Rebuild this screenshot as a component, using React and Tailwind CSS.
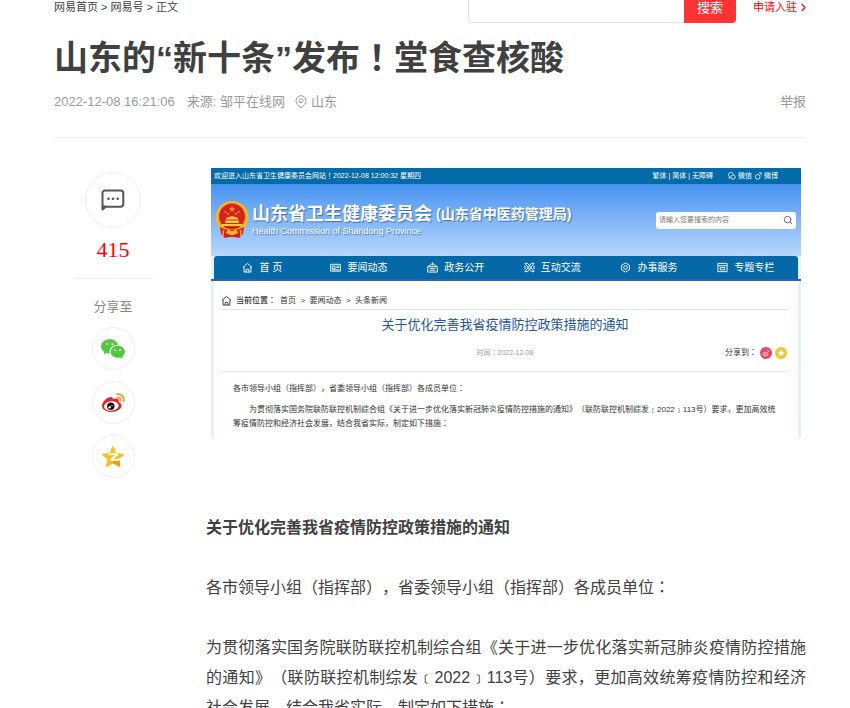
import { RiWechatFill } from "react-icons/ri";
import { Search, ChevronRight } from "lucide-react";

const STAR = "M12 1.5l3.2 7 7.6.8-5.7 5.1 1.6 7.5L12 18.1l-6.700 3.800 1.600-7.500L1.200 9.300l7.600-.8z";

const HOME = "M1 6l5-4.500L11 6M2.300 5v6h7.400V5M4.500 11V8h3v3";

const navItems = [
  { label: "首 页", path: HOME },
  { label: "要闻动态", path: "M.7 2.500h10.600v7.500H.7zM2.500 4.500h3v3h-3zM7 4.500h3M7 6h3M2.500 8.500H10" },
  { label: "政务公开", path: "M1 5l5-3.500L11 5M.8 5h10.400v6H.8zM3 7h6M3 9h6M6 .5v3" },
  { label: "互动交流", path: "M1 1.500h3L11 10.500H8zM8 1.500h3L4 10.500H1zM1 4v4M11 4v4" },
  { label: "办事服务", path: "M6 1l4.300 2.500v5L6 11 1.700 8.500v-5zM4 6a2 2 0 1 0 4 0a2 2 0 1 0-4 0" },
  { label: "专题专栏", path: "M1 1.500h10v9H1zM1 4h10M3.500 6h5v2.500h-5z" },
];

const LineIcon = ({ path }) => (
  <svg viewBox="0 0 12 12" className="w-[11px] h-[11px] shrink-0" fill="none" stroke="currentColor">
    <path d={path} strokeLinejoin="round" />
  </svg>
);

// sets ：！ in the middle of their cell
const Zh = ({ children }) =>
  children.split(/([：！])/).map((part, i) =>
    i % 2 ? (
      <span key={i} lang="zh-Hant" className="leading-none font-['Noto_Sans_CJK_TC',sans-serif]">
        {part}
      </span>
    ) : (
      part
    ),
  );

const CommentIcon = () => (
  <svg viewBox="0 0 24 24" className="w-6 h-6" fill="none">
    <path
      d="M1.500 21.500V5.500A2.700 2.700 0 0 1 4.200 2.500h15.400a2.700 2.700 0 0 1 2.700 2.700v10.800a2.700 2.700 0 0 1-2.700 2.700H4.800z"
      stroke="#555"
      strokeWidth="2"
      strokeLinejoin="round"
    />
    <path d="M1 17.500h4.500L1 22.500z" fill="#555" />
    <circle cx="7.500" cy="10.700" r="1.300" fill="#555" />
    <circle cx="12" cy="10.700" r="1.300" fill="#555" />
    <circle cx="16.700" cy="10.700" r="1.300" fill="#555" />
  </svg>
);

const WeiboIcon = () => (
  <svg viewBox="0 0 24 24" className="w-6 h-6" fill="none">
    <path
      d="M9.300 6C5.500 6.600 1 11.200 1 14.700 1 18.600 5.600 21 10.300 21c5.700 0 10.200-3 10.200-6.500 0-2-1.500-3-3-3.500.5-1.700.2-3-1.200-3.400-1.300-.4-3 .1-4.500.7C12.100 6.800 11.500 5.700 9.300 6z"
      fill="#dd2a2e"
    />
    <ellipse cx="10.300" cy="15" rx="7.300" ry="4.700" fill="#fff" transform="rotate(-6 10.300 15)" />
    <circle cx="9.800" cy="15.300" r="3.700" fill="#111" />
    <circle cx="8.700" cy="16.200" r="1.200" fill="#fff" />
    <circle cx="11" cy="14.300" r=".6" fill="#fff" />
    <path
      d="M16 3.300c4-1 7.600 2.400 6.600 7M16.600 6.600c2-.4 3.300 1 2.900 3"
      stroke="#f29a1f"
      strokeWidth="1.700"
      strokeLinecap="round"
    />
  </svg>
);

const QzoneIcon = () => (
  <svg viewBox="0 0 24 24" className="w-6 h-6">
    <path d={STAR} fill="#f8c01c" stroke="#f8c01c" strokeLinejoin="round" />
    <path d="M12.500 15.500l6-1 .9 7L12 18.100z" fill="#ee9a12" />
    <path
      d="M7.500 9.500c3-.7 6-.7 9 0l-6.500 5c2.800.6 5.500.5 8.500-.2"
      fill="none"
      stroke="#fff"
      strokeWidth="1.800"
      strokeLinejoin="round"
    />
  </svg>
);

const Emblem = () => (
  <svg viewBox="0 0 34 40" className="w-[34px] h-10 shrink-0">
    <path d="M7 27h20l1 7-4 4-4-1h-6l-4 1-4-4z" fill="#d81e1a" />
    <circle cx="17" cy="17.500" r="16.500" fill="#f4b52c" />
    <circle cx="17" cy="16.500" r="13" fill="#d9221c" />
    <path d="M17 6l.9 2.200h2.300l-1.900 1.500.7 2.300-2-1.400-2 1.400.7-2.300-1.900-1.500h2.300z" fill="#f0a03a" />
    <g fill="#f0a03a">
      <circle cx="10.500" cy="12" r="1" />
      <circle cx="13" cy="14" r="1" />
      <circle cx="21" cy="14" r="1" />
      <circle cx="23.500" cy="12" r="1" />
    </g>
    <path d="M11 18l6-2 6 2v1.500H11zM10 20.500h14V23H10zM7 24h20v2H7z" fill="#f9cf3f" />
    <path d="M5 27c6 4 18 4 24 0l-1 7c-3-1-5-2-7-2h-8c-2 0-4 1-7 2z" fill="#d9221c" />
    <path d="M12 28.500l5 3 5-3v5l-5 2-5-2z" fill="#f4b52c" />
    <path d="M8.500 30l-.5 6M25.500 30l.5 6" stroke="#f4b52c" strokeWidth="1.500" />
  </svg>
);

const PinIcon = () => (
  <svg viewBox="0 0 12 14" className="w-3 h-[14px]" fill="none" stroke="#999">
    <path d="M6 13C3 10.300 1 8.200 1 5.700a5 5 0 0 1 10 0C11 8.200 9 10.300 6 13z" />
    <circle cx="6" cy="5.700" r="2" />
  </svg>
);

const ShareButton = ({ label, children }) => (
  <button
    aria-label={label}
    className="flex items-center justify-center w-[43px] h-[43px] rounded-full border border-[#eee]"
  >
    {children}
  </button>
);

const SiteNotice = () => (
  <div className="mx-[5px] h-[270px] overflow-hidden bg-[#e6effd] text-[8px] leading-[14px] text-[#333]">
    <div className="flex items-center justify-between h-4 pl-[3px] pr-[23px] bg-[#046ba9] text-[7px] text-white">
      <span>
        <Zh>欢迎进入山东省卫生健康委员会网站！2022-12-08 12:00:32 星期四</Zh>
      </span>
      <div className="flex items-center gap-[15px]">
        <span>繁体 | 简体 | 无障碍</span>
        <span className="flex items-center gap-[2px]">
          <svg viewBox="0 0 10 10" className="w-2 h-2" fill="none" stroke="#fff">
            <path d="M3 7L1.500 8V5.500a3 3 0 1 1 5-2.500" />
            <circle cx="6.300" cy="6.300" r="2.700" />
          </svg>
          微信
          <svg viewBox="0 0 10 10" className="w-2 h-2" fill="none" stroke="#fff">
            <circle cx="4.500" cy="6" r="3" />
            <path d="M6 1h3v3" />
          </svg>
          微博
        </span>
      </div>
    </div>
    <div className="flex items-center justify-between h-[72px] pl-1 pr-[5px] bg-linear-to-b from-[#4593f0] to-[#b9d7fb]">
      <div className="flex items-center gap-[3px]">
        <Emblem />
        <div className="text-white text-shadow-[1px_1px_1px_#3a6fae]">
          <div className="flex items-center gap-1 font-bold">
            <span className="text-[18px] leading-[22px]">山东省卫生健康委员会</span>
            <span className="text-[14px] leading-[22px]">(山东省中医药管理局)</span>
          </div>
          <div className="text-[9px] leading-[12px]">Health Commission of Shandong Province</div>
        </div>
      </div>
      <div className="flex items-center w-[140px] h-[17px] px-[3px] rounded-[3px] bg-white">
        <input
          aria-label="站内搜索"
          placeholder="请输入您要搜索的内容"
          className="flex-1 min-w-0 outline-none text-[7px] placeholder:text-[#777]"
        />
        <Search className="w-[10px] h-[10px] text-[#555]" />
      </div>
    </div>
    <div className="mx-[3px] h-[23px] rounded-t-[3px] bg-[#0569a8]">
      <nav className="grid grid-cols-6 h-full pr-1">
        {navItems.map(({ label, path }) => (
          <a
            key={label}
            href="#"
            className="flex items-center justify-center gap-[6px] text-[10px] text-white"
          >
            <LineIcon path={path} />
            {label}
          </a>
        ))}
      </nav>
    </div>
    <div className="h-[2px] bg-[#2f65a8]" />
    <div className="mx-[3px] h-full pl-[7px] pr-[9px] pt-[11px] bg-white">
      <div className="flex items-center h-[18px] border-b border-[#e2e8dc]">
        <span className="mr-1">
          <LineIcon path={HOME} />
        </span>
        <span className="font-medium mr-1">
          <Zh>当前位置：</Zh>
        </span>
        <span className="whitespace-pre">首页  &gt;  要闻动态  &gt;  头条新闻</span>
      </div>
      <h3 className="mt-[5px] text-center text-[13px] leading-[20px] text-[#2455a4]">
        关于优化完善我省疫情防控政策措施的通知
      </h3>
      <div className="grid grid-cols-3 items-center mt-[11px] h-[14px]">
        <span className="col-start-2 text-center text-[7px] text-[#999]">
          <Zh>时间：2022-12-08</Zh>
        </span>
        <span className="flex items-center justify-end gap-[3px] pr-[2px]">
          <span>
            <Zh>分享到：</Zh>
          </span>
          <span className="flex items-center justify-center w-3 h-3 rounded-full bg-[#e6445f]">
            <svg viewBox="0 0 12 12" className="w-2 h-2" fill="none" stroke="#fff">
              <ellipse cx="5" cy="7.500" rx="4" ry="3" />
              <circle cx="5" cy="7.500" r="1" />
              <path d="M7.500 1.500c2 0 3 1 3 3" />
            </svg>
          </span>
          <span className="flex items-center justify-center w-3 h-3 rounded-full bg-[#ecc92f]">
            <svg viewBox="0 0 24 24" className="w-2 h-2" fill="#fff">
              <path d={STAR} />
            </svg>
          </span>
        </span>
      </div>
      <div className="mt-[11px] border-t border-[#e2e5ea]" />
      <div className="pl-3 pt-[10px]">
        <p>
          <Zh>各市领导小组（指挥部），省委领导小组（指挥部）各成员单位：</Zh>
        </p>
        <p className="mt-[7px] indent-4 whitespace-nowrap">
          为贯彻落实国务院联防联控机制综合组《关于进一步优化落实新冠肺炎疫情防控措施的通知》（联防联控机制综发﹝2022﹞113号）要求，更加高效统
          <br />
          <Zh>筹疫情防控和经济社会发展，结合我省实际，制定如下措施：</Zh>
        </p>
      </div>
    </div>
  </div>
);

const App = () => {
  return (
    <div className="max-h-screen overflow-hidden bg-white pl-[54px] pr-[44px] text-[#404040] [text-spacing-trim:space-all] font-['Liberation_Sans','Noto_Sans_CJK_SC',sans-serif]">
      <header className="flex items-start justify-between h-[23px] text-[11px] leading-[14px]">
        <nav>
          <a href="#">网易首页</a> &gt; <a href="#">网易号</a> &gt; <span>正文</span>
        </nav>
        <div className="flex">
          <input
            aria-label="搜索"
            className="w-[216px] h-[23px] px-2 border border-t-0 border-r-0 border-[#e5e5e5] rounded-bl-[4px] outline-none"
          />
          <button className="w-[52px] h-[23px] pb-2 rounded-br-[4px] bg-[#ff3333] text-[13px] leading-[15px] text-white">
            搜索
          </button>
          <a href="#" className="flex items-center h-[14px] ml-[17px] -mr-1 text-[#f00]">
            申请入驻
            <ChevronRight className="w-[13px] h-[13px]" />
          </a>
        </div>
      </header>

      <h1 className="mt-3 text-[34px] leading-[46px] font-bold">
        <Zh>山东的“新十条”发布！堂食查核酸</Zh>
      </h1>
      <div className="flex items-center mt-[11px] pb-[25px] border-b border-[#eee] text-[13px] leading-[20px] text-[#999]">
        <span>2022-12-08 16:21:06</span>
        <span className="ml-3">来源: 邹平在线网</span>
        <span className="flex items-center gap-1 ml-[10px]">
          <PinIcon />
          山东
        </span>
        <a href="#" className="ml-auto">
          举报
        </a>
      </div>

      <div className="flex mt-[30px]">
        <aside className="w-[152px] shrink-0 pl-[19px] pr-[53px] pt-1">
          <div className="flex flex-col items-center">
            <button
              aria-label="评论"
              className="flex items-center justify-center w-14 h-14 rounded-full border border-[#eee]"
            >
              <CommentIcon />
            </button>
            <a
              href="#"
              className="mt-[9px] text-[22px] leading-[26px] text-[#f00] font-['Liberation_Serif',serif]"
            >
              415
            </a>
            <div className="self-stretch mt-[15px] border-t border-[#eee]" />
            <span className="mt-[18px] text-[13px] leading-[20px] text-[#888]">分享至</span>
            <div className="flex flex-col gap-[11px] mt-[10px]">
              <ShareButton label="微信">
                <RiWechatFill className="w-[26px] h-[26px] text-[#4fc83d]" />
              </ShareButton>
              <ShareButton label="微博">
                <WeiboIcon />
              </ShareButton>
              <ShareButton label="QQ空间">
                <QzoneIcon />
              </ShareButton>
            </div>
          </div>
        </aside>

        <article className="flex-1 min-w-0 text-[16px] leading-[30px]">
          <SiteNotice />
          <h2 className="mt-[75px] font-bold">关于优化完善我省疫情防控政策措施的通知</h2>
          <p className="mt-[30px]">
            <Zh>各市领导小组（指挥部），省委领导小组（指挥部）各成员单位：</Zh>
          </p>
          <p className="mt-[30px] text-justify">
            <Zh>为贯彻落实国务院联防联控机制综合组《关于进一步优化落实新冠肺炎疫情防控措施的通知》（联防联控机制综发﹝2022﹞113号）要求，更加高效统筹疫情防控和经济社会发展，结合我省实际，制定如下措施：</Zh>
          </p>
        </article>
      </div>
    </div>
  );
};

export default App;
